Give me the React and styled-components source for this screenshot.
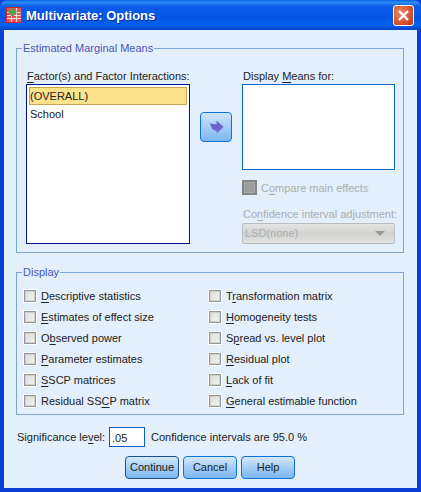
import React from "react";
import styled, { createGlobalStyle } from "styled-components";

const GlobalStyle = createGlobalStyle`
  html, body {
    margin: 0;
    padding: 0;
    background: #0831d9;
  }
  * {
    box-sizing: border-box;
  }
`;

const Window = styled.div`
  width: 421px;
  height: 492px;
  display: flex;
  flex-direction: column;
  overflow: hidden;
  font-family: "Liberation Sans", "Noto Sans", sans-serif;
  font-size: 11px;
  color: #222;
  background: #0a3fd6;
`;

const TitleBar = styled.div`
  height: 30px;
  flex: none;
  display: flex;
  align-items: center;
  padding: 0 7px 0 6px;
  gap: 4px;
  border-radius: 7px 7px 0 0;
  background: linear-gradient(180deg, #0a5fe0 0%, #2b8cf5 8%, #0a5ce8 22%, #0355e6 60%, #0560ee 85%, #0243c4 100%);
`;

const TitleText = styled.span`
  flex: 1;
  color: #fff;
  font-size: 13px;
  font-weight: 700;
  text-shadow: 1px 1px 0 #0a2f9c;
`;

const CloseBtn = styled.div`
  width: 21px;
  height: 21px;
  border: 1px solid #fff;
  border-radius: 3px;
  background: radial-gradient(circle at 35% 35%, #e88a6a, #d4532c 60%, #bf3a14);
  display: flex;
  align-items: center;
  justify-content: center;
`;

const Body = styled.div`
  flex: 1;
  margin: 0 4px 4px;
  background: #e3effb;
  padding: 18px 13px 0 12px;
  display: flex;
  flex-direction: column;
`;

const Group = styled.div`
  position: relative;
  border: 1px solid #7ba7d7;
  height: ${(p) => p.$h}px;
  margin-bottom: ${(p) => p.$mb || 0}px;
  flex: none;
`;

const Legend = styled.span`
  position: absolute;
  top: -8px;
  left: 5px;
  padding: 0 1px;
  background: #e3effb;
  color: #4a56b8;
  line-height: 15px;
`;

const MeansRow = styled.div`
  display: flex;
  padding: 20px 0 0 9px;
`;

const Column = styled.div`
  display: flex;
  flex-direction: column;
  width: ${(p) => p.$w}px;
`;

const FieldLabel = styled.div`
  height: 15px;
  line-height: 15px;
  padding-left: 1px;
  margin-top: ${(p) => p.$mt || 0}px;
  white-space: nowrap;
  color: ${(p) => (p.$off ? "#a9aeb4" : "#222")};
`;

const ListBox = styled.div`
  height: ${(p) => p.$h}px;
  background: #fff;
  border: 1px solid ${(p) => p.$line};
  padding: 2px 2px;
`;

const ListItem = styled.div`
  height: 18px;
  line-height: 16px;
  padding-left: 0;
  border: 1px solid ${(p) => (p.$sel ? "#c4a656" : "transparent")};
  background: ${(p) => (p.$sel ? "#fde28d" : "transparent")};
`;

const ArrowBtn = styled.div`
  width: 32px;
  height: 30px;
  margin: 43px 10px 0;
  flex: none;
  border: 1px solid #0b72d6;
  border-radius: 4px;
  background: linear-gradient(180deg, #cfe4fb 0%, #a9d0f7 45%, #7db6f1 100%);
  display: flex;
  align-items: center;
  justify-content: center;
`;

const CheckRow = styled.div`
  display: flex;
  align-items: center;
  gap: ${(p) => p.$gap || 4}px;
  height: ${(p) => p.$h || 21}px;
  margin-top: ${(p) => p.$mt || 0}px;
  white-space: nowrap;
  color: ${(p) => (p.$off ? "#a9aeb4" : "#222")};
`;

const Box = styled.span`
  width: 14px;
  height: 14px;
  flex: none;
  border: 1px solid #fff;
  box-shadow: inset 0 0 0 1px #96989a, inset 0 0 0 2px #cfcfcb;
  background: linear-gradient(135deg, #dcdcd8, #f4f4f0);
`;

const OffBox = styled.span`
  width: 15px;
  height: 15px;
  flex: none;
  border: 1px solid #858585;
  background: #9c9c9c;
  box-shadow: inset 0 0 0 1px #858585, inset 0 0 0 2px #aaa;
`;

const Select = styled.div`
  height: 21px;
  margin-top: 1px;
  border: 1px solid #b9bcc0;
  border-radius: 2px;
  background: linear-gradient(180deg, #e4e4e2 0%, #d2d2d0 50%, #e2e2e0 100%);
  color: #a9aeb4;
  line-height: 19px;
  padding: 0 9px 0 2px;
  display: flex;
  justify-content: space-between;
  align-items: center;
`;

const Caret = styled.span`
  width: 0;
  height: 0;
  border-left: 5px solid transparent;
  border-right: 5px solid transparent;
  border-top: 5px solid #9a9a9a;
`;

const DisplayGrid = styled.div`
  display: grid;
  grid-template-columns: 185px 185px;
  grid-auto-flow: column;
  grid-template-rows: repeat(6, 21px);
  padding: 12px 0 0 6px;
`;

const SigRow = styled.div`
  display: flex;
  align-items: center;
  height: 20px;
  margin-top: 12px;
  padding-left: 1px;
  white-space: nowrap;
`;

const SigInput = styled.div`
  width: 36px;
  height: 20px;
  margin: 0 6px 0 4px;
  background: #fff;
  border: 1px solid #0b5cc4;
  padding: 3px 0 0 2px;
  line-height: 15px;
`;

const Buttons = styled.div`
  display: flex;
  justify-content: center;
  gap: 4px;
  margin-top: 9px;
`;

const Button = styled.div`
  width: 54px;
  height: 23px;
  border: 1px solid ${(p) => (p.$main ? "#1c4f86" : "#0b72d6")};
  border-radius: 4px;
  background: linear-gradient(180deg, #d5e8fb 0%, #a9d0f7 45%, #7db6f1 100%);
  text-align: center;
  line-height: 21px;
`;

const Key = styled.u`
  text-underline-offset: 2px;
`;

const WINDOW_ICON = (
  <svg width="16" height="16" viewBox="0 0 16 16">
    <rect x="0.5" y="0.5" width="15" height="15" fill="#e9545a" stroke="#c9252e" />
    <path d="M1 5.5H15M1 8.5H15M1 11.5H15M5.5 1V15M10.5 1V15" stroke="#f9dcd8" strokeWidth="1" />
    <path d="M5 1h3v2.5h2.5v3H8V9H5V6.5H2.5v-3H5z" fill="#3fae4a" />
  </svg>
);

const LEFT_CHECKS = [
  [<Key>D</Key>, "escriptive statistics"],
  [<Key>E</Key>, "stimates of effect size"],
  ["O", <Key>b</Key>, "served power"],
  [<Key>P</Key>, "arameter estimates"],
  [<Key>S</Key>, "SCP matrices"],
  ["Residual SS", <Key>C</Key>, "P matrix"],
];

const RIGHT_CHECKS = [
  ["T", <Key>r</Key>, "ansformation matrix"],
  [<Key>H</Key>, "omogeneity tests"],
  ["S", <Key>p</Key>, "read vs. level plot"],
  [<Key>R</Key>, "esidual plot"],
  [<Key>L</Key>, "ack of fit"],
  [<Key>G</Key>, "eneral estimable function"],
];

export default function App() {
  return (
    <>
      <GlobalStyle />
      <Window>
        <TitleBar>
          {WINDOW_ICON}
          <TitleText>Multivariate: Options</TitleText>
          <CloseBtn>
            <svg width="13" height="13" viewBox="0 0 13 13">
              <path d="M2 2L11 11M11 2L2 11" stroke="#fff" strokeWidth="2.4" />
            </svg>
          </CloseBtn>
        </TitleBar>
        <Body>
          <Group $h={205} $mb={19}>
            <Legend>Estimated Marginal Means</Legend>
            <MeansRow>
              <Column $w={164}>
                <FieldLabel>
                  <Key>F</Key>actor(s) and Factor Interactions:
                </FieldLabel>
                <ListBox $h={160} $line="#00109c">
                  <ListItem $sel>(OVERALL)</ListItem>
                  <ListItem>School</ListItem>
                </ListBox>
              </Column>
              <ArrowBtn>
                <svg width="15" height="14" viewBox="0 0 16 15">
                  <path d="M8 0.5L15.5 7.5L8 14.5V11.5C5 11.5 2 9 1 3.5C3 4.5 5 4.5 8 4.5Z" fill="#6a63d0" />
                </svg>
              </ArrowBtn>
              <Column $w={153}>
                <FieldLabel>
                  Display <Key>M</Key>eans for:
                </FieldLabel>
                <ListBox $h={86} $line="#0b66c8" />
                <CheckRow $off $h={15} $gap={4} $mt={10}>
                  <OffBox />
                  <span>
                    C<Key>o</Key>mpare main effects
                  </span>
                </CheckRow>
                <FieldLabel $off $mt={12}>
                  Co<Key>n</Key>fidence interval adjustment:
                </FieldLabel>
                <Select>
                  LSD(none)
                  <Caret />
                </Select>
              </Column>
            </MeansRow>
          </Group>
          <Group $h={143}>
            <Legend>Display</Legend>
            <DisplayGrid>
              {[...LEFT_CHECKS, ...RIGHT_CHECKS].map((parts, i) => (
                <CheckRow key={i}>
                  <Box />
                  <span>{parts.map((p, j) => <React.Fragment key={j}>{p}</React.Fragment>)}</span>
                </CheckRow>
              ))}
            </DisplayGrid>
          </Group>
          <SigRow>
            Significance le<Key>v</Key>el:
            <SigInput>.05</SigInput>
            Confidence intervals are 95.0 %
          </SigRow>
          <Buttons>
            <Button $main>Continue</Button>
            <Button>Cancel</Button>
            <Button>Help</Button>
          </Buttons>
        </Body>
      </Window>
    </>
  );
}
